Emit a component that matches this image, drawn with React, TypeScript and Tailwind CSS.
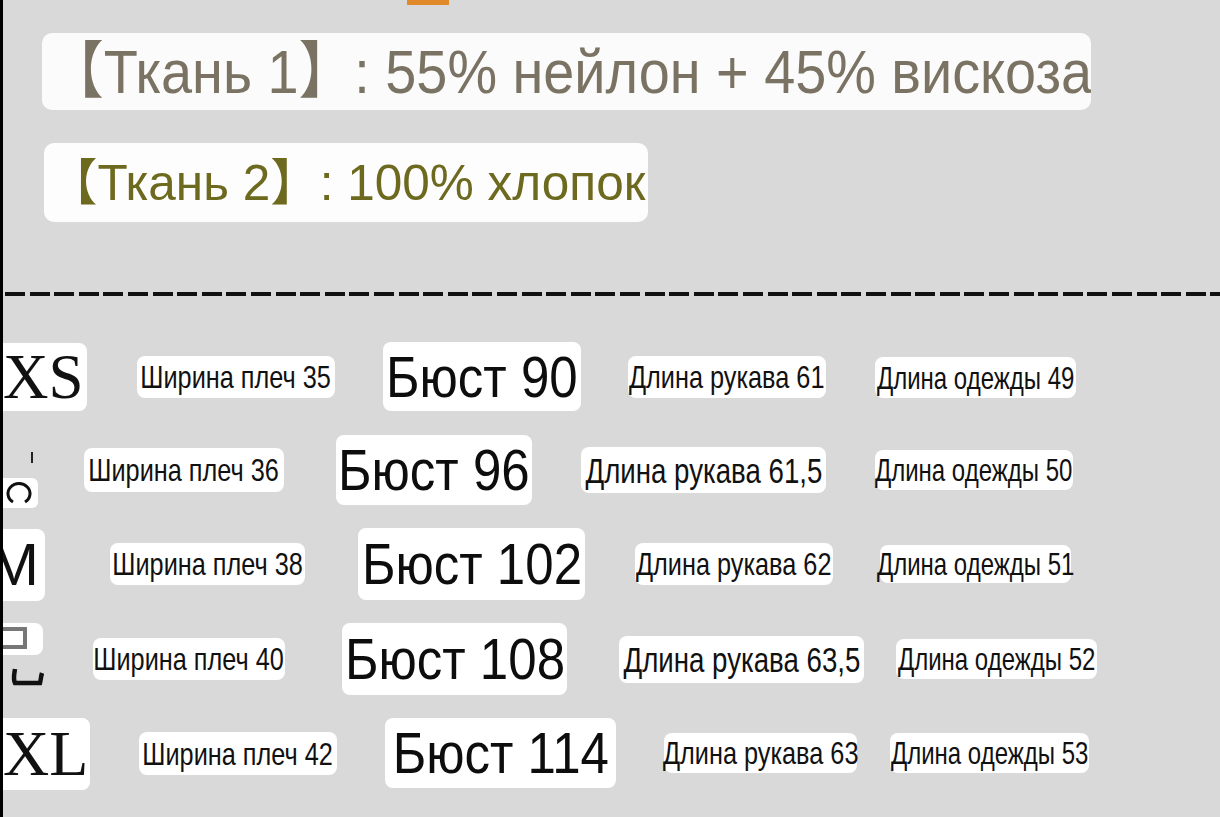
import type { ReactNode } from "react";

function Tag({
  box,
  text,
  children,
}: {
  box: string;
  text: string;
  children: ReactNode;
}) {
  return (
    <div
      className={`flex shrink-0 items-center justify-center rounded-[8px] bg-white ${box}`}
    >
      <span className={`inline-block whitespace-nowrap leading-none ${text}`}>
        {children}
      </span>
    </div>
  );
}

const small = "text-[32px] text-[#111] scale-x-[0.79]";
const sleeve = "text-[35px] text-[#111] scale-x-[0.79]";
const length = "text-[32px] text-[#111] scale-x-[0.75]";
const bust = "text-[58px] text-[#0d0d0d] scale-x-[0.88]";

export default function App() {
  return (
    <main className="h-[817px] w-[1220px] overflow-hidden border-l-[3px] border-black bg-[#d9d9d9] font-['Liberation_Sans','Noto_Sans_CJK_SC',sans-serif]">
      <div className="ml-[404px] h-[5px] w-[42px] bg-[#e08a2b]" />

      {/* fabrics */}
      <div className="ml-[39px] mt-[28px] flex h-[77px] w-[1049px] items-center overflow-hidden rounded-[10px] bg-white/90 pl-[6px]">
        <span className="inline-block origin-left scale-x-[0.9] whitespace-nowrap text-[62px] leading-none text-[#7a7262]">
          【Ткань 1】: 55% нейлон + 45% вискоза
        </span>
      </div>
      <div className="ml-[41px] mt-[33px] flex h-[79px] w-[604px] items-center overflow-hidden rounded-[10px] bg-white/95 pl-[4px]">
        <span className="inline-block origin-left scale-x-[0.99] whitespace-nowrap text-[50px] leading-none text-[#6d6a20]">
          【Ткань 2】: 100% хлопок
        </span>
      </div>

      <div className="ml-[2px] mt-[70px] h-[4px] bg-[repeating-linear-gradient(90deg,#111_0_20px,transparent_20px_24.6px)]" />

      {/* sizes */}
      <div className="mt-[34px]">
        <div className="flex h-[94px] items-start">
          <div className="mt-[13px] flex h-[68px] w-[84px] shrink-0 items-center overflow-hidden rounded-r-[8px] bg-white">
            <span className="font-['Liberation_Serif',serif] text-[63px] leading-none text-[#111]">XS</span>
          </div>
          <Tag box="ml-[50px] mt-[26px] h-[42px] w-[198px]" text={small}>Ширина плеч 35</Tag>
          <Tag box="ml-[48px] mt-[12px] h-[69px] w-[198px]" text={bust}>Бюст 90</Tag>
          <Tag box="ml-[47px] mt-[26px] h-[42px] w-[198px]" text={small}>Длина рукава 61</Tag>
          <Tag box="ml-[49px] mt-[27px] h-[41px] w-[201px]" text={length}>Длина одежды 49</Tag>
        </div>

        <div className="flex h-[94px] items-start">
          <div className="relative h-[94px] w-[35px] shrink-0">
            <div className="absolute left-[28px] top-[28px] h-[11px] w-[2px] bg-[#222]" />
            <div className="absolute left-0 top-[54px] flex h-[30px] w-[35px] items-end rounded-r-[6px] bg-white pb-[4px] pl-[2px]">
              <svg width="28" height="22" viewBox="0 0 28 22">
                <path d="M8 20 A11 10 0 1 1 20 20" fill="none" stroke="#111" strokeWidth="3" />
              </svg>
            </div>
          </div>
          <Tag box="ml-[46px] mt-[24px] h-[44px] w-[200px]" text={small}>Ширина плеч 36</Tag>
          <Tag box="ml-[52px] mt-[11px] h-[70px] w-[196px]" text={bust}>Бюст 96</Tag>
          <Tag box="ml-[49px] mt-[23px] h-[46px] w-[245px]" text={sleeve}>Длина рукава 61,5</Tag>
          <Tag box="ml-[49px] mt-[26px] h-[40px] w-[198px]" text={length}>Длина одежды 50</Tag>
        </div>

        <div className="flex h-[94px] items-start">
          <div className="mt-[11px] flex h-[72px] w-[42px] shrink-0 items-center overflow-hidden rounded-r-[8px] bg-white">
            <span className="-ml-[14px] text-[60px] leading-none text-[#111]">M</span>
          </div>
          <Tag box="ml-[65px] mt-[25px] h-[42px] w-[195px]" text={small}>Ширина плеч 38</Tag>
          <Tag box="ml-[53px] mt-[10px] h-[72px] w-[227px]" text={bust}>Бюст 102</Tag>
          <Tag box="ml-[50px] mt-[25px] h-[42px] w-[198px]" text={small}>Длина рукава 62</Tag>
          <Tag box="ml-[47px] mt-[27px] h-[38px] w-[191px]" text={length}>Длина одежды 51</Tag>
        </div>

        <div className="flex h-[94px] items-start">
          <div className="relative h-[94px] w-[40px] shrink-0">
            <div className="absolute left-0 top-[11px] h-[32px] w-[40px] rounded-r-[8px] bg-white">
              <svg className="absolute left-0 top-[3px]" width="26" height="24" viewBox="0 0 26 24">
                <path d="M0 3 H22 V21 H0" fill="none" stroke="#777" strokeWidth="4" />
              </svg>
            </div>
            <svg className="absolute left-[6px] top-[55px]" width="36" height="20" viewBox="0 0 36 20">
              <path d="M6 2 C5 8 4 12 6 16 H31 C32 12 32 9 33 6" fill="none" stroke="#111" strokeWidth="4.5" />
            </svg>
          </div>
          <Tag box="ml-[50px] mt-[26px] h-[42px] w-[192px]" text={small}>Ширина плеч 40</Tag>
          <Tag box="ml-[57px] mt-[11px] h-[72px] w-[225px]" text={bust}>Бюст 108</Tag>
          <Tag box="ml-[52px] mt-[24px] h-[47px] w-[245px]" text={sleeve}>Длина рукава 63,5</Tag>
          <Tag box="ml-[32px] mt-[27px] h-[40px] w-[201px]" text={length}>Длина одежды 52</Tag>
        </div>

        <div className="flex h-[94px] items-start">
          <div className="mt-[12px] flex h-[72px] w-[87px] shrink-0 items-center overflow-hidden rounded-r-[8px] bg-white">
            <span className="font-['Liberation_Serif',serif] text-[64px] leading-none text-[#111]">XL</span>
          </div>
          <Tag box="ml-[49px] mt-[26px] h-[43px] w-[198px]" text={small}>Ширина плеч 42</Tag>
          <Tag box="ml-[48px] mt-[12px] h-[70px] w-[231px]" text={bust}>Бюст 114</Tag>
          <Tag box="ml-[48px] mt-[27px] h-[40px] w-[193px]" text={small}>Длина рукава 63</Tag>
          <Tag box="ml-[33px] mt-[27px] h-[40px] w-[199px]" text={length}>Длина одежды 53</Tag>
        </div>
      </div>
    </main>
  );
}
